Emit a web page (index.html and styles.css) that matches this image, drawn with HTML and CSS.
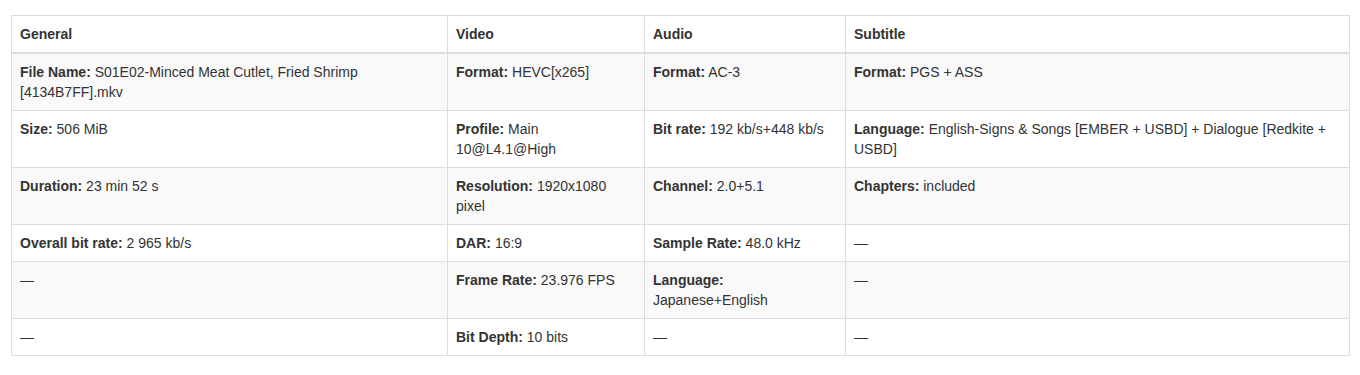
FILE: index.html
```html
<!DOCTYPE html>
<html>
<head>
<meta charset="utf-8">
<link rel="stylesheet" href="styles.css">
</head>
<body>
<div class="wrap">
<table class="media">
<colgroup>
<col class="c1"><col class="c2"><col class="c3"><col class="c4">
</colgroup>
<thead>
<tr><th>General</th><th>Video</th><th>Audio</th><th>Subtitle</th></tr>
</thead>
<tbody>
<tr>
<td><b>File Name:</b> S01E02-Minced Meat Cutlet, Fried Shrimp [4134B7FF].mkv</td>
<td><b>Format:</b> HEVC[x265]</td>
<td><b>Format:</b> AC-3</td>
<td><b>Format:</b> PGS + ASS</td>
</tr>
<tr>
<td><b>Size:</b> 506 MiB</td>
<td><b>Profile:</b> Main 10@L4.1@High</td>
<td><b>Bit rate:</b> 192 kb/s+448 kb/s</td>
<td><b>Language:</b> English-Signs &amp; Songs [EMBER + USBD] + Dialogue [Redkite + USBD]</td>
</tr>
<tr>
<td><b>Duration:</b> 23 min 52 s</td>
<td><b>Resolution:</b> 1920x1080 pixel</td>
<td><b>Channel:</b> 2.0+5.1</td>
<td><b>Chapters:</b> included</td>
</tr>
<tr>
<td><b>Overall bit rate:</b> 2 965 kb/s</td>
<td><b>DAR:</b> 16:9</td>
<td><b>Sample Rate:</b> 48.0 kHz</td>
<td>—</td>
</tr>
<tr>
<td>—</td>
<td><b>Frame Rate:</b> 23.976 FPS</td>
<td><b>Language:</b> Japanese+English</td>
<td>—</td>
</tr>
<tr>
<td>—</td>
<td><b>Bit Depth:</b> 10 bits</td>
<td>—</td>
<td>—</td>
</tr>
</tbody>
</table>
</div>
</body>
</html>
```
FILE: styles.css
```css
html, body {
  margin: 0;
  padding: 0;
  background: #fff;
}
body {
  font-family: "Liberation Sans", Arial, sans-serif;
  font-size: 14px;
  line-height: 20px;
  color: #333;
}
.wrap {
  padding: 15px 0 0 11px;
}
.media {
  border-collapse: collapse;
  border-spacing: 0;
  table-layout: fixed;
  width: 1338px;
  border: 1px solid #ddd;
}
.c1 { width: 436px; }
.c2 { width: 197px; }
.c3 { width: 201px; }
.c4 { width: 504px; }
.media th,
.media td {
  padding: 8px;
  border: 1px solid #ddd;
  text-align: left;
  vertical-align: top;
}
.media th {
  font-weight: bold;
  border-bottom-width: 2px;
}
.media b {
  font-weight: bold;
}
.media tbody tr:nth-child(odd) {
  background: #f9f9f9;
}
```
